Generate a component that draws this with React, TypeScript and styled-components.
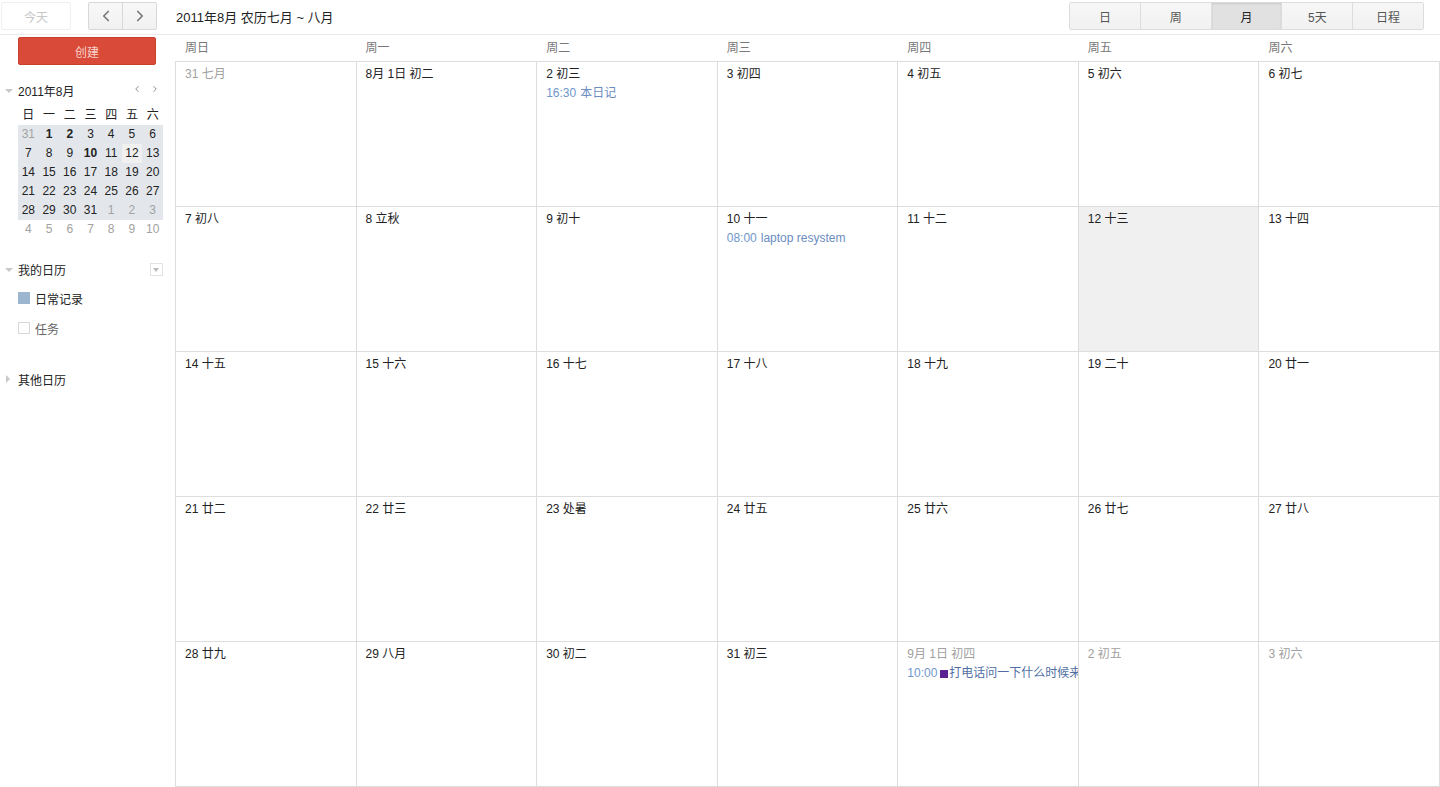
import React from "react";
import styled, { createGlobalStyle, css } from "styled-components";
import { ChevronLeft, ChevronRight } from "lucide-react";

const GlobalStyle = createGlobalStyle`
  html, body {
    margin: 0;
    padding: 0;
    background: #fff;
  }
  body {
    font-family: "Liberation Sans", Arial, "Noto Sans CJK SC", sans-serif;
    font-size: 12px;
    color: #222;
    overflow: hidden;
  }
`;

type Cell = {
  label: string;
  muted?: boolean;
  today?: boolean;
  events?: { time: string; title: string; dot?: string }[];
};

const lunar = [
  ["31 七月", "8月 1日 初二", "2 初三", "3 初四", "4 初五", "5 初六", "6 初七"],
  ["7 初八", "8 立秋", "9 初十", "10 十一", "11 十二", "12 十三", "13 十四"],
  ["14 十五", "15 十六", "16 十七", "17 十八", "18 十九", "19 二十", "20 廿一"],
  ["21 廿二", "22 廿三", "23 处暑", "24 廿五", "25 廿六", "26 廿七", "27 廿八"],
  ["28 廿九", "29 八月", "30 初二", "31 初三", "9月 1日 初四", "2 初五", "3 初六"],
];

const weeks: Cell[][] = lunar.map((row, r) =>
  row.map((label, c) => {
    const cell: Cell = { label };
    if ((r === 0 && c === 0) || (r === 4 && c >= 4)) cell.muted = true;
    if (r === 1 && c === 5) cell.today = true;
    if (r === 0 && c === 2) cell.events = [{ time: "16:30", title: "本日记" }];
    if (r === 1 && c === 3) cell.events = [{ time: "08:00", title: "laptop resystem" }];
    if (r === 4 && c === 4)
      cell.events = [{ time: "10:00", title: "打电话问一下什么时候来", dot: "#5b2391" }];
    return cell;
  })
);

const weekdays = ["周日", "周一", "周二", "周三", "周四", "周五", "周六"];
const miniWeekdays = ["日", "一", "二", "三", "四", "五", "六"];

const miniDays: { n: number; muted?: boolean; bold?: boolean; today?: boolean }[][] = [
  [{ n: 31, muted: true }, { n: 1, bold: true }, { n: 2, bold: true }, { n: 3 }, { n: 4 }, { n: 5 }, { n: 6 }],
  [{ n: 7 }, { n: 8 }, { n: 9 }, { n: 10, bold: true }, { n: 11 }, { n: 12, today: true }, { n: 13 }],
  [{ n: 14 }, { n: 15 }, { n: 16 }, { n: 17 }, { n: 18 }, { n: 19 }, { n: 20 }],
  [{ n: 21 }, { n: 22 }, { n: 23 }, { n: 24 }, { n: 25 }, { n: 26 }, { n: 27 }],
  [{ n: 28 }, { n: 29 }, { n: 30 }, { n: 31 }, { n: 1, muted: true }, { n: 2, muted: true }, { n: 3, muted: true }],
];
const trailing = [4, 5, 6, 7, 8, 9, 10];

const views = ["日", "周", "月", "5天", "日程"];

function App() {
  return (
    <Page>
      <GlobalStyle />
      <TopBar>
        <TopLeft>
          <TodayButton>今天</TodayButton>
          <NavGroup>
            <NavButton>
              <ChevronLeft size={18} strokeWidth={2.2} />
            </NavButton>
            <NavButton>
              <ChevronRight size={18} strokeWidth={2.2} />
            </NavButton>
          </NavGroup>
        </TopLeft>
        <Title>2011年8月 农历七月 ~ 八月</Title>
        <ViewSwitch>
          {views.map(v => (
            <ViewButton key={v} $active={v === "月"}>
              {v}
            </ViewButton>
          ))}
        </ViewSwitch>
      </TopBar>

      <Body>
        <Sidebar>
          <CreateButton>创建</CreateButton>

          <MiniHeader>
            <Caret />
            <span>2011年8月</span>
            <MiniArrows>
              <ChevronLeft size={10} strokeWidth={2} />
              <ChevronRight size={10} strokeWidth={2} />
            </MiniArrows>
          </MiniHeader>
          <MiniGrid>
            {miniWeekdays.map(d => (
              <MiniHead key={d}>{d}</MiniHead>
            ))}
          </MiniGrid>
          <MiniMonth>
            {miniDays.flat().map((d, i) => (
              <MiniDay key={i} $muted={d.muted} $bold={d.bold} $today={d.today}>
                {d.n}
              </MiniDay>
            ))}
          </MiniMonth>
          <MiniGrid>
            {trailing.map(n => (
              <MiniDay key={n} $muted>
                {n}
              </MiniDay>
            ))}
          </MiniGrid>

          <SectionHeader $gap={21}>
            <Caret />
            <span>我的日历</span>
            <MenuBox />
          </SectionHeader>
          <CalendarItem $first>
            <Swatch $color="#9cb6d0" />
            <span>日常记录</span>
          </CalendarItem>
          <CalendarItem $dim>
            <Swatch />
            <span>任务</span>
          </CalendarItem>

          <SectionHeader $gap={27}>
            <Caret $closed />
            <span>其他日历</span>
          </SectionHeader>
        </Sidebar>

        <Main>
          <WeekdayRow>
            {weekdays.map(d => (
              <WeekdayName key={d}>{d}</WeekdayName>
            ))}
          </WeekdayRow>
          <MonthGrid>
            {weeks.flat().map((cell, i) => (
              <DayCell key={i} $today={cell.today}>
                <DayLabel $muted={cell.muted}>{cell.label}</DayLabel>
                {cell.events?.map(ev => (
                  <EventLine key={ev.time}>
                    <EventTime>{ev.time}</EventTime>
                    {ev.dot && <EventDot style={{ background: ev.dot }} />}
                    <EventTitle $dark={!!ev.dot}>{ev.title}</EventTitle>
                  </EventLine>
                ))}
              </DayCell>
            ))}
          </MonthGrid>
        </Main>
      </Body>
    </Page>
  );
}

export default App;

const Page = styled.div`
  width: 1440px;
  height: 787px;
  display: flex;
  flex-direction: column;
`;

const TopBar = styled.div`
  display: flex;
  align-items: center;
  height: 34px;
  border-bottom: 1px solid #ebebeb;
  box-sizing: content-box;
`;

const TopLeft = styled.div`
  width: 176px;
  display: flex;
  align-items: center;
  padding-left: 1px;
  box-sizing: border-box;
`;

const TodayButton = styled.div`
  width: 70px;
  height: 28px;
  margin-top: -2px;
  box-sizing: border-box;
  border: 1px solid #f0f0f0;
  border-radius: 2px;
  color: #c8c8c8;
  display: flex;
  align-items: center;
  justify-content: center;
  font-size: 12px;
`;

const NavGroup = styled.div`
  display: flex;
  margin-left: 17px;
  margin-top: -2px;
  border: 1px solid #d8d8d8;
  border-radius: 2px;
  background: linear-gradient(#f8f8f8, #f1f1f1);
`;

const NavButton = styled.div`
  width: 33px;
  height: 26px;
  display: flex;
  align-items: center;
  justify-content: center;
  color: #777;
  & + & {
    border-left: 1px solid #d8d8d8;
  }
`;

const Title = styled.div`
  font-size: 13px;
  color: #222;
  margin-top: -1px;
`;

const ViewSwitch = styled.div`
  display: flex;
  margin-left: auto;
  margin-right: 16px;
  margin-top: -2px;
  border: 1px solid #dcdcdc;
  border-radius: 2px;
`;

const ViewButton = styled.div<{ $active?: boolean }>`
  width: 69.8px;
  height: 26px;
  display: flex;
  align-items: center;
  justify-content: center;
  font-size: 12px;
  color: #555;
  background: linear-gradient(#f7f7f7, #f1f1f1);
  & + & {
    border-left: 1px solid #dcdcdc;
  }
  ${p =>
    p.$active &&
    css`
      background: #e1e1e1;
      color: #222;
      box-shadow: inset 0 1px 2px rgba(0, 0, 0, 0.1);
    `}
`;

const Body = styled.div`
  flex: 1;
  display: flex;
  min-height: 0;
`;

const Sidebar = styled.div`
  width: 175px;
  flex-shrink: 0;
  padding-left: 18px;
  box-sizing: border-box;
  display: flex;
  flex-direction: column;
`;

const CreateButton = styled.div`
  margin-top: 2px;
  width: 138px;
  height: 28px;
  box-sizing: border-box;
  border: 1px solid #c8412f;
  border-radius: 2px;
  background: #d94a38;
  color: #f7d4ce;
  font-size: 12px;
  display: flex;
  align-items: center;
  justify-content: center;
`;

const Caret = styled.i<{ $closed?: boolean }>`
  position: absolute;
  left: -13px;
  top: 50%;
  width: 0;
  height: 0;
  ${p =>
    p.$closed
      ? css`
          margin-top: -4px;
          border-top: 4px solid transparent;
          border-bottom: 4px solid transparent;
          border-left: 4px solid #c8c8c8;
          left: -12px;
        `
      : css`
          margin-top: -1px;
          border-left: 4px solid transparent;
          border-right: 4px solid transparent;
          border-top: 4px solid #c8c8c8;
        `}
`;

const MiniHeader = styled.div`
  position: relative;
  margin-top: 16px;
  height: 18px;
  width: 145px;
  display: flex;
  align-items: center;
  font-size: 12px;
  color: #222;
`;

const MiniArrows = styled.div`
  margin-left: auto;
  margin-right: 3px;
  display: flex;
  gap: 8px;
  color: #777;
  margin-top: -3px;
`;

const MiniGrid = styled.div`
  width: 145px;
  display: grid;
  grid-template-columns: repeat(7, 1fr);
`;

const MiniHead = styled.div`
  height: 20px;
  line-height: 20px;
  margin-top: 6px;
  text-align: center;
  color: #222;
`;

const MiniMonth = styled(MiniGrid)`
  background: #e3e7ec;
`;

const MiniDay = styled.div<{ $muted?: boolean; $bold?: boolean; $today?: boolean }>`
  height: 19px;
  line-height: 19px;
  text-align: center;
  color: ${p => (p.$muted ? "#a2a2a2" : "#222")};
  font-weight: ${p => (p.$bold ? "bold" : "normal")};
  background: ${p => (p.$today ? "#f0f0f0" : "transparent")};
`;

const SectionHeader = styled.div<{ $gap: number }>`
  position: relative;
  margin-top: ${p => p.$gap}px;
  height: 18px;
  width: 145px;
  display: flex;
  align-items: center;
  color: #222;
`;

const MenuBox = styled.div`
  margin-left: auto;
  width: 11px;
  height: 11px;
  border: 1px solid #e3e3e3;
  position: relative;
  &::after {
    content: "";
    position: absolute;
    left: 2px;
    top: 4px;
    border-left: 3.5px solid transparent;
    border-right: 3.5px solid transparent;
    border-top: 4px solid #bbb;
  }
`;

const CalendarItem = styled.div<{ $dim?: boolean; $first?: boolean }>`
  height: 30px;
  margin-top: ${p => (p.$first ? "5px" : "0")};
  display: flex;
  align-items: center;
  gap: 5px;
  color: ${p => (p.$dim ? "#666" : "#222")};
`;

const Swatch = styled.span<{ $color?: string }>`
  width: 12px;
  height: 12px;
  box-sizing: border-box;
  background: ${p => p.$color ?? "#fff"};
  border: 1px solid ${p => p.$color ?? "#d8d8d8"};
`;

const Main = styled.div`
  flex: 1;
  display: flex;
  flex-direction: column;
  min-width: 0;
`;

const WeekdayRow = styled.div`
  height: 26px;
  display: grid;
  grid-template-columns: repeat(7, 1fr);
  padding-left: 1px;
`;

const WeekdayName = styled.div`
  padding-left: 9px;
  line-height: 26px;
  color: #777;
`;

const MonthGrid = styled.div`
  flex: 1;
  display: grid;
  grid-template-columns: repeat(7, 1fr);
  grid-template-rows: repeat(5, 1fr);
  border-top: 1px solid #dddddd;
  border-left: 1px solid #dddddd;
`;

const DayCell = styled.div<{ $today?: boolean }>`
  border-right: 1px solid #dddddd;
  border-bottom: 1px solid #dddddd;
  padding: 3px 0 0 9px;
  min-width: 0;
  overflow: hidden;
  background: ${p => (p.$today ? "#f0f0f0" : "#fff")};
`;

const DayLabel = styled.div<{ $muted?: boolean }>`
  line-height: 19px;
  color: ${p => (p.$muted ? "#a0a0a0" : "#222")};
`;

const EventLine = styled.div`
  line-height: 19px;
  white-space: nowrap;
  overflow: hidden;
  display: flex;
  align-items: center;
`;

const EventTime = styled.span`
  color: #7096cb;
  margin-right: 4px;
`;

const EventDot = styled.span`
  width: 8px;
  height: 8px;
  margin: 1px 1px 0 -1px;
  flex-shrink: 0;
`;

const EventTitle = styled.span<{ $dark?: boolean }>`
  color: ${p => (p.$dark ? "#4f6fa3" : "#6a8cc2")};
`;
